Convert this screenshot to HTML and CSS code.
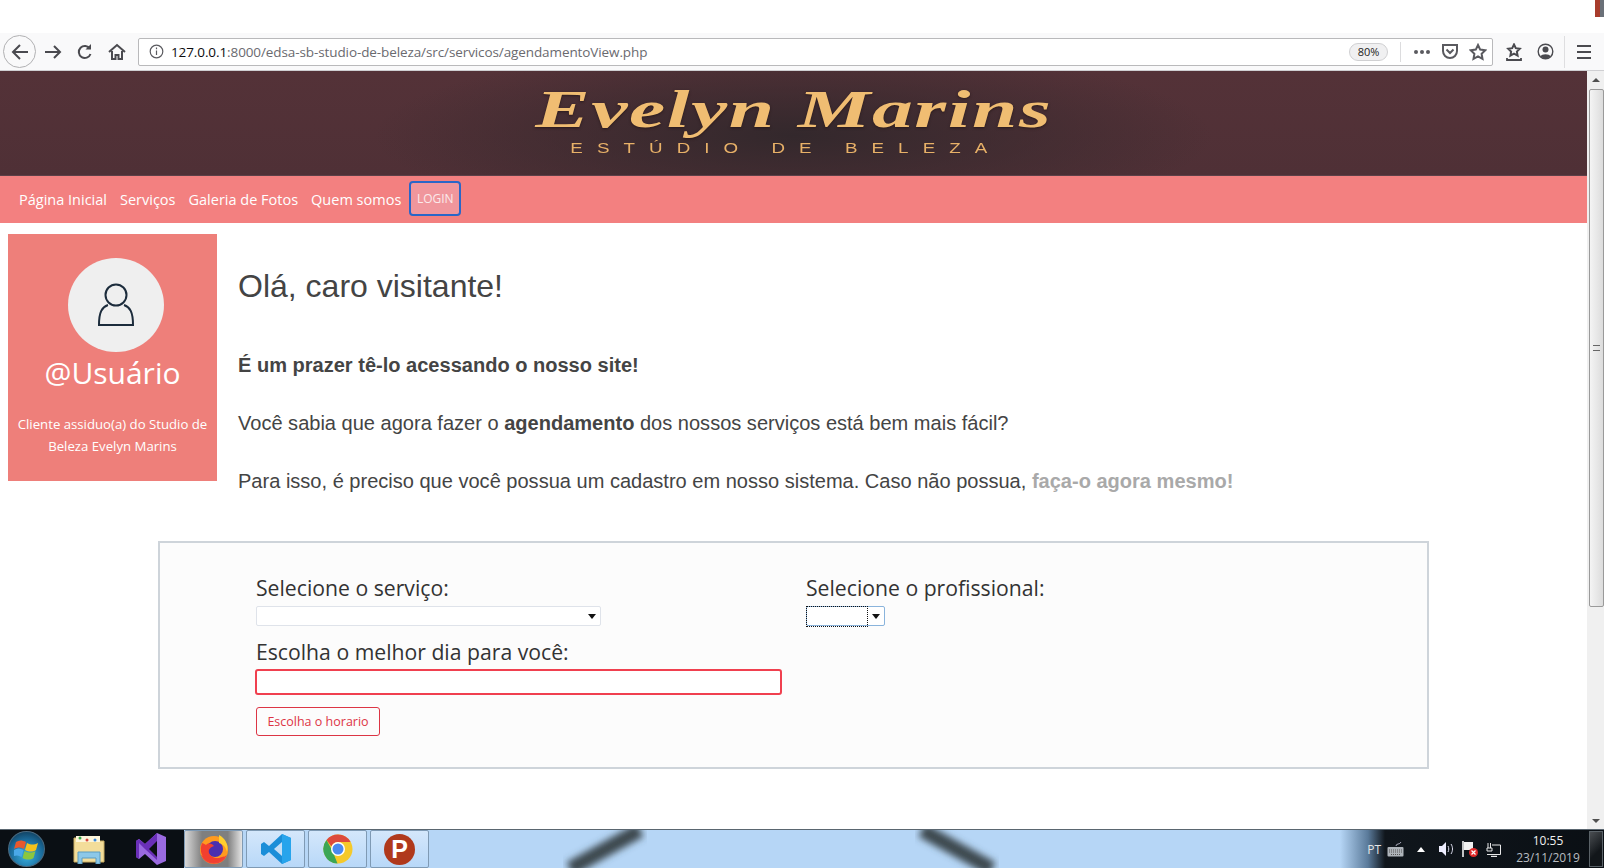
FILE: index.html
```html
<!DOCTYPE html>
<html lang="pt">
<head>
  <meta charset="UTF-8" />
  <title>Agendamento</title>
  <link rel="stylesheet" href="styles.css">
</head>
<body>

  <!-- Strip above the browser -->
  <div class="top-strip"><span class="corner"></span></div>

  <!-- Browser toolbar -->
  <div class="toolbar">
    <button class="tool back-btn">
      <svg width="20" height="20" viewBox="0 0 20 20" fill="none" stroke="#4a4a4f" stroke-width="2"><path d="M18 10H3M10 3l-7 7 7 7"/></svg>
    </button>
    <button class="tool">
      <svg width="18" height="18" viewBox="0 0 18 18" fill="none" stroke="#4a4a4f" stroke-width="2"><path d="M1 9h15M10 3l6 6-6 6"/></svg>
    </button>
    <button class="tool">
      <svg width="18" height="18" viewBox="0 0 18 18" fill="none" stroke="#4a4a4f" stroke-width="2"><path d="M14.5 11a6 6 0 1 1-.6-5.2"/><path d="M15 1v5.5H9.5" fill="#4a4a4f" stroke="none"/></svg>
    </button>
    <button class="tool">
      <svg width="18" height="18" viewBox="0 0 18 18" fill="none" stroke="#4a4a4f" stroke-width="2"><path d="M1 9l8-7 8 7"/><path d="M4 8v8h3.5v-4h3v4H14V8"/></svg>
    </button>

    <div class="urlbar">
      <svg class="info" width="15" height="15" viewBox="0 0 15 15" fill="none" stroke="#5a5a5f" stroke-width="1.2"><circle cx="7.5" cy="7.5" r="6.3"/><path d="M7.5 6.5v4.5M7.5 3.6v1.6"/></svg>
      <span class="url"><b>127.0.0.1</b>:8000/edsa-sb-studio-de-beleza/src/servicos/agendamentoView.php</span>
      <span class="zoom-badge">80%</span>
      <span class="url-sep"></span>
      <span class="dots"><i></i><i></i><i></i></span>
      <svg class="url-icon" width="18" height="18" viewBox="0 0 18 18" fill="none" stroke="#5a5a5f" stroke-width="2"><path d="M2 2h14v6a7 7 0 0 1-14 0z"/><path d="M5.5 6.5L9 10l3.5-3.5"/></svg>
      <svg class="url-icon" width="18" height="18" viewBox="0 0 18 18" fill="none" stroke="#5a5a5f" stroke-width="2"><path d="M9 2l2.2 4.6 5 .7-3.6 3.5.9 5L9 13.4l-4.5 2.4.9-5L1.8 7.3l5-.7z"/></svg>
    </div>

    <button class="tool lib">
      <svg width="18" height="18" viewBox="0 0 18 18" fill="none" stroke="#4a4a4f" stroke-width="2"><path d="M9 1.5l1.8 3.7 4 .6-2.9 2.800.7 4L9 10.700l-3.600 1.900.7-4L3.200 5.800l4-.6z"/><path d="M2 15v2h14v-2" stroke-width="1.8"/></svg>
    </button>
    <button class="tool">
      <svg width="17" height="17" viewBox="0 0 17 17"><circle cx="8.5" cy="8.5" r="7.3" fill="none" stroke="#4a4a4f" stroke-width="1.4"/><circle cx="8.5" cy="6.5" r="3" fill="#4a4a4f"/><path d="M3.5 13.5c1-3 9-3 10 0a7 7 0 0 1-10 0z" fill="#4a4a4f"/></svg>
    </button>
    <span class="tool-sep"></span>
    <button class="tool burger"><i></i><i></i><i></i></button>
  </div>

  <div class="window">
    <div class="page">
      <header class="banner">
        <div class="logo-name">Evelyn Marins</div>
        <div class="logo-sub">ESTÚDIO DE BELEZA</div>
      </header>

      <nav class="nav">
        <a href="#">Página Inicial</a>
        <a href="#">Serviços</a>
        <a href="#">Galeria de Fotos</a>
        <a href="#">Quem somos</a>
        <a href="#" class="login">LOGIN</a>
      </nav>

      <div class="content">
        <aside class="profile">
          <div class="avatar">
            <svg width="38" height="44" viewBox="0 0 38 44" fill="none" stroke="#1c2c3c" stroke-width="2"><circle cx="19" cy="12" r="10.5"/><path d="M11 22C5 24 2 29 2 42h34c0-13-3-18-9-20"/></svg>
          </div>
          <div class="profile-name">@Usuário</div>
          <p class="profile-text">Cliente assiduo(a) do Studio de Beleza Evelyn Marins</p>
        </aside>

        <section class="welcome">
          <h1>Olá, caro visitante!</h1>
          <p class="lead">É um prazer tê-lo acessando o nosso site!</p>
          <p>Você sabia que agora fazer o <b>agendamento</b> dos nossos serviços está bem mais fácil?</p>
          <p>Para isso, é preciso que você possua um cadastro em nosso sistema. Caso não possua, <a href="#">faça-o agora mesmo!</a></p>
        </section>
      </div>

      <form class="booking">
        <div class="col-left">
          <label>Selecione o serviço:</label>
          <span class="select-wrap service-wrap"><select></select></span>
          <label class="day-label">Escolha o melhor dia para você:</label>
          <input type="text" class="day-input" />
          <button type="button" class="btn-time">Escolha o horario</button>
        </div>
        <div class="col-right">
          <label>Selecione o profissional:</label>
          <span class="select-wrap pro-wrap"><select></select></span>
        </div>
      </form>
    </div>

    <div class="scrollbar">
      <span class="sb-btn"><i class="up"></i></span>
      <div class="sb-track">
        <div class="sb-thumb"><span class="grip"></span></div>
      </div>
      <span class="sb-btn"><i class="down"></i></span>
    </div>
  </div>

  <!-- Windows taskbar -->
  <footer class="taskbar">
    <svg class="wallpaper" width="920" height="39" viewBox="0 0 920 39">
      <defs><filter id="soft"><feGaussianBlur stdDeviation="3.5"/></filter></defs>
      <path d="M120 39L190 0" stroke="#3c4a50" stroke-width="15" filter="url(#soft)"/>
      <path d="M472 0L542 39" stroke="#3c4a50" stroke-width="15" filter="url(#soft)"/>
    </svg>

    <div class="start">
      <span class="orb">
        <svg width="26" height="24" viewBox="0 0 26 24"><path d="M2 5c3-2 6-2 10 0l-2 7c-3-2-6-2-10 0z" fill="#e8582c"/><path d="M13 6c4 2 7 2 11 0l-2 7c-3 2-7 2-11 0z" fill="#f4c21c"/><path d="M0 13c3-2 6-2 9.5 0l-2 7c-3-2-6-2-9.5 0z" fill="#4aa8e8"/><path d="M10.5 14c4 2 7 2 11 0l-2 7c-3 2-7 2-11 0z" fill="#8cc63f"/></svg>
      </span>
    </div>

    <span class="pin">
      <svg width="32" height="30" viewBox="0 0 32 30"><path d="M1 4h12l3 3h15v21H1z" fill="#f3dd9a" stroke="#c9ae64"/><path d="M3 2h24v6H3z" fill="#fdf6dc"/><circle cx="7" cy="4" r="1.5" fill="#3aa648"/><circle cx="14" cy="6" r="1.5" fill="#d8483c"/><circle cx="22" cy="6" r="1.5" fill="#3a88d8"/><path d="M5 18h22v12h-4v-6H9v6H5z" fill="#8cc8e8" stroke="#5a9cc0"/></svg>
    </span>
    <span class="pin">
      <svg width="32" height="34" viewBox="0 0 32 34"><path d="M22 1l9 4v24l-9 4-12-11-6 5-3-2V9l3-2 6 5z" fill="#9a6ae0"/><path d="M22 1l-12 11-6-5-3 2v16l3 2V11l6 6 12 11z" fill="#6a2fb8"/><path d="M22 9l-8 8 8 8z" fill="#0c1014"/></svg>
    </span>

    <span class="task active">
      <svg width="32" height="32" viewBox="0 0 32 32"><circle cx="16" cy="17" r="14" fill="#ff9a1f"/><path d="M3 22a14 14 0 0 0 26 0c-5 4-16 5-26 0z" fill="#f0433a"/><circle cx="17" cy="16" r="8" fill="#4a2fb0"/><path d="M21 2c6 3 10 10 8 17-1-5-4-8-8-9z" fill="#ffcf2e"/><path d="M4 10c-3 8 0 15 6 18 7 3 13 0 16-5-6 4-13 2-15-3-1-4 2-6 5-7-3-3-6-3-8-1-1-1-2-1-4-2z" fill="#f2402f"/></svg>
    </span>
    <span class="task">
      <svg width="32" height="32" viewBox="0 0 32 32"><path d="M22 1l9 4v22l-9 4L9 19l-5 4-3-2v-10l3-2 5 4z" fill="#1a8ed8"/><path d="M22 9l-8 7 8 7z" fill="#c2ddf6"/><path d="M22 1l9 4v22l-9 4z" fill="#27a4ec"/></svg>
    </span>
    <span class="task">
      <svg width="30" height="30" viewBox="0 0 30 30"><circle cx="15" cy="15" r="14.5" fill="#f5c92a"/><path d="M15 .5A14.5 14.5 0 0 1 27.6 8H15a7 7 0 0 0-6.5 4.5L3.5 6A14.5 14.5 0 0 1 15 .5z" fill="#dd4a3c"/><path d="M3.5 6l6 11 5 12.5A14.5 14.5 0 0 1 3.5 6z" fill="#3ba655"/><circle cx="15" cy="15" r="7" fill="#fff"/><circle cx="15" cy="15" r="5.5" fill="#4a8af0"/></svg>
    </span>
    <span class="task">
      <span class="psiphon">P</span>
    </span>

    <div class="tray">
      <span class="lang">PT</span>
      <svg width="17" height="15" viewBox="0 0 17 15"><path d="M9 4c0-3 4-1 5-4" fill="none" stroke="#aab" stroke-width="1"/><rect x=".5" y="5" width="16" height="9.5" rx="1" fill="#aeb4ba"/><path d="M2 8h13M2 10h13M4 12.5h9" stroke="#555" stroke-dasharray="1 1"/></svg>
      <i class="tray-up"></i>
      <svg width="15" height="14" viewBox="0 0 15 14"><path d="M0 4h3l4-4v14l-4-4H0z" fill="#eef"/><path d="M9 4c1 2 1 4 0 6M12 2c2 3 2 7 0 10" fill="none" stroke="#dde" stroke-width="1"/></svg>
      <svg width="16" height="16" viewBox="0 0 16 16"><path d="M1 0v16" stroke="#fff" stroke-width="1.5"/><path d="M2 1h9v8H2z" fill="#f0f0f0"/><circle cx="11.5" cy="11.5" r="4.5" fill="#e02a2a"/><path d="M9.5 9.5l4 4M13.5 9.5l-4 4" stroke="#fff" stroke-width="1.2"/></svg>
      <svg width="15" height="15" viewBox="0 0 15 15" fill="none" stroke="#e8e8e8"><path d="M2 1v5M4.5 1v5M1 6h5v3H1z"/><path d="M6 3h8.5v9.500H1"/><path d="M5 14.5h6" stroke-width="1.4"/></svg>
      <div class="clock"><span>10:55</span><span>23/11/2019</span></div>
      <span class="show-desktop"></span>
    </div>
  </footer>

</body>
</html>
```

FILE: styles.css
```css
* {
  box-sizing: border-box;
}

html, body {
  height: 100%;
}

body {
  margin: 0;
  height: 868px;
  width: 1604px;
  overflow: hidden;
  display: flex;
  flex-direction: column;
  font-family: 'Liberation Sans', Arial, sans-serif;
  color: #444;
  background: white;
}

/* strip above browser */
.top-strip {
  height: 33px;
  flex: none;
  display: flex;
  justify-content: flex-end;
  background: white;
}

.corner {
  width: 9px;
  height: 17px;
  background: linear-gradient(to right, #a83c2c 55%, #6a7078 55%);
}

/* toolbar */
.toolbar {
  height: 38px;
  flex: none;
  display: flex;
  align-items: center;
  padding: 0 3px;
  background: #f9f9fa;
  border-bottom: 1px solid #cfcfd2;
}

.tool {
  width: 32px;
  height: 32px;
  flex: none;
  display: flex;
  align-items: center;
  justify-content: center;
  padding: 0;
  border: none;
  background: none;
}

.back-btn {
  width: 33px;
  height: 33px;
  border: 1px solid #b1b1b3;
  border-radius: 50%;
  margin-right: 1px;
}

.urlbar {
  width: 1355px;
  height: 28px;
  margin-left: 5px;
  margin-right: 5px;
  flex: none;
  display: flex;
  align-items: center;
  padding: 0 5px 0 10px;
  background: white;
  border: 1px solid #b9b9bb;
  border-radius: 2px;
}

.info {
  margin-right: 7px;
  flex: none;
}

.url {
  flex: 1;
  font-family: 'Open Sans', sans-serif;
  font-size: 13.5px;
  letter-spacing: -0.1px;
  color: #6a6a6f;
  white-space: nowrap;
}

.url b {
  font-weight: normal;
  color: #0c0c0d;
}

.zoom-badge {
  width: 39px;
  height: 18px;
  line-height: 16px;
  text-align: center;
  font-family: 'Open Sans', sans-serif;
  font-size: 11px;
  color: #222;
  background: #f0f0f1;
  border: 1px solid #d0d0d2;
  border-radius: 9px;
}

.url-sep {
  width: 1px;
  height: 20px;
  margin: 0 13px 0 12px;
  background: #dcdcde;
}

.dots {
  display: flex;
  gap: 2px;
  margin-right: 11px;
}

.dots i {
  width: 4px;
  height: 4px;
  border-radius: 50%;
  background: #5a5a5f;
}

.url-icon {
  margin-right: 10px;
  flex: none;
}

.url-icon:last-child {
  margin-right: 0;
}

.lib {
  margin-right: -1px;
}

.tool-sep {
  width: 1px;
  height: 32px;
  margin: 0 3px 0 3px;
  background: #dedee0;
  flex: none;
}

.burger {
  flex-direction: column;
  gap: 4px;
}

.burger i {
  width: 14px;
  height: 2px;
  background: #4a4a4f;
}

/* page */
.window {
  height: 758px;
  flex: none;
  display: flex;
}

.page {
  width: 1587px;
  flex: none;
  overflow: hidden;
}

.banner {
  height: 105px;
  display: flex;
  flex-direction: column;
  align-items: center;
  padding-top: 14px;
  background: radial-gradient(ellipse 420px 90px at 50% 62%, #33282c 0%, #46303a00 100%), linear-gradient(#543238, #4f3036);
  border-bottom: 1px solid #5c4048;
}

.logo-name {
  font-family: 'Liberation Serif', serif;
  font-style: italic;
  font-weight: bold;
  font-size: 52px;
  line-height: 50px;
  letter-spacing: 1px;
  color: #f0bd72;
  white-space: nowrap;
  transform: scaleX(1.57);
  text-shadow: 0 1px 2px #2a1a1c;
}

.logo-sub {
  font-size: 14px;
  line-height: 14px;
  margin-top: 6px;
  letter-spacing: 10.5px;
  margin-right: 16px;
  color: #e8b168;
  white-space: nowrap;
  transform: scaleX(1.34);
}

.nav {
  height: 47px;
  display: flex;
  align-items: center;
  padding: 0 8px 0 19px;
  background: #f38080;
}

.nav a {
  font-family: 'Open Sans', sans-serif;
  font-size: 14.5px;
  color: white;
  text-decoration: none;
  margin-right: 13px;
  white-space: nowrap;
}

.nav .login {
  width: 52px;
  height: 35px;
  margin-left: -5px;
  margin-top: -3px;
  padding: 0;
  line-height: 31px;
  text-align: center;
  font-size: 12px;
  color: #fbeaea;
  background: #f0969c;
  border: 2px solid #2a66c8;
  border-radius: 4px;
}

.content {
  display: flex;
  padding: 11px 0 0 8px;
}

.profile {
  width: 209px;
  height: 247px;
  flex: none;
  display: flex;
  flex-direction: column;
  align-items: center;
  padding-top: 24px;
  background: #ee7f7a;
  color: white;
}

.avatar {
  width: 96px;
  height: 94px;
  flex: none;
  display: flex;
  align-items: center;
  justify-content: center;
  margin-left: 7px;
  background: #efefef;
  border-radius: 50%;
}

.profile-name {
  font-family: 'Open Sans', sans-serif;
  font-size: 30px;
  line-height: 40px;
  margin-top: 1px;
}

.profile-text {
  margin: 20px 0 0;
  padding: 0 4px;
  text-align: center;
  font-family: 'Open Sans', sans-serif;
  font-size: 13.2px;
  line-height: 22px;
}

.welcome {
  margin-left: 21px;
  font-size: 20.05px;
  line-height: 28px;
}

.welcome h1 {
  margin: 32px 0 0;
  font-size: 32px;
  font-weight: normal;
  line-height: 40px;
}

.welcome p {
  margin: 30px 0 0;
}

.welcome .lead {
  margin-top: 45px;
  font-weight: bold;
}

.welcome a {
  color: #a9a9a9;
  font-weight: bold;
  text-decoration: none;
}

.booking {
  width: 1271px;
  height: 228px;
  margin: 46px 0 0 158px;
  display: flex;
  padding: 29px 0 0 96px;
  background: #fcfcfc;
  border: 2px solid #ced4da;
}

.col-left {
  width: 527px;
  margin-right: 23px;
  display: flex;
  flex-direction: column;
  align-items: flex-start;
}

.col-right {
  display: flex;
  flex-direction: column;
  align-items: flex-start;
}

.booking label {
  font-family: 'Open Sans', sans-serif;
  font-size: 21.2px;
  line-height: 32px;
  color: #333;
  white-space: nowrap;
}

.select-wrap {
  position: relative;
  display: block;
  height: 20px;
  margin-top: 2px;
}

.select-wrap::after {
  content: "";
  position: absolute;
  right: 5px;
  top: 8px;
  border-left: 4px solid transparent;
  border-right: 4px solid transparent;
  border-top: 5px solid #111;
}

.select-wrap select {
  display: block;
  width: 100%;
  height: 20px;
  appearance: none;
  background: white;
  border: 1px solid #dfe3ea;
  border-radius: 2px;
}

.service-wrap {
  width: 345px;
}

.pro-wrap {
  width: 79px;
}

.pro-wrap::before {
  content: "";
  position: absolute;
  left: 0;
  top: 0;
  width: 60px;
  height: 19px;
  border: 1px dotted #111;
}

.pro-wrap select {
  border-color: #8ab4dc;
}

.booking .day-label {
  margin-top: 10px;
}

.day-input {
  width: 527px;
  height: 26px;
  margin: 1px 0 0 -1px;
  padding: 0;
  background: white;
  border: 2px solid #f0404f;
  border-radius: 3px;
}

.btn-time {
  width: 124px;
  height: 29px;
  margin-top: 12px;
  padding: 0;
  font-family: 'Open Sans', sans-serif;
  font-size: 12.5px;
  color: #dc3545;
  background: #fcfcfc;
  border: 1px solid #dc3545;
  border-radius: 3px;
}

/* scrollbar */
.scrollbar {
  width: 17px;
  flex: none;
  display: flex;
  flex-direction: column;
  background: #f0f0f0;
}

.sb-btn {
  height: 17px;
  flex: none;
  display: flex;
  align-items: center;
  justify-content: center;
}

.sb-btn i {
  width: 0;
  height: 0;
  border-left: 4px solid transparent;
  border-right: 4px solid transparent;
}

.sb-btn .up {
  border-bottom: 4px solid #505050;
}

.sb-btn .down {
  border-top: 4px solid #505050;
}

.sb-track {
  flex: 1;
  padding: 1px 0 0 2px;
}

.sb-thumb {
  height: 518px;
  display: flex;
  align-items: center;
  justify-content: center;
  background: linear-gradient(to right, #f4f4f4, #dcdcdc);
  border: 1px solid #9a9a9a;
  border-radius: 2px;
}

.grip {
  width: 7px;
  height: 6px;
  border-top: 1px solid #666;
  border-bottom: 1px solid #666;
  background: linear-gradient(transparent 40%, #666 40%, #666 60%, transparent 60%);
}

/* taskbar */
.taskbar {
  position: relative;
  height: 39px;
  flex: none;
  display: flex;
  align-items: center;
  overflow: hidden;
  background: linear-gradient(to right, #0a0f14 0, #0a0f14 184px, #b6d6f6 184px, #b6d6f6 1340px, #5a7a9a 1368px, #10161c 1385px, #0a0f14 100%);
  border-top: 1px solid #5a6670;
}

.wallpaper {
  position: absolute;
  left: 450px;
  top: 0;
}

.start {
  width: 53px;
  height: 38px;
  flex: none;
  display: flex;
  align-items: center;
  justify-content: center;
}

.orb {
  width: 37px;
  height: 36px;
  display: flex;
  align-items: center;
  justify-content: center;
  border-radius: 50%;
  background: radial-gradient(circle at 50% 70%, #3ab0e0 0%, #1a6a9a 55%, #0c2a40 100%);
  border: 1px solid #4a6a80;
}

.pin {
  width: 72px;
  flex: none;
  display: flex;
  justify-content: center;
  position: relative;
}

.pin + .pin {
  width: 52px;
  margin-right: 7px;
}

.task {
  position: relative;
  width: 59px;
  height: 38px;
  margin-right: 3px;
  flex: none;
  display: flex;
  align-items: center;
  justify-content: center;
  background: linear-gradient(#d4e7fb, #b8d8f8);
  border: 1px solid #7f9ab4;
  border-radius: 2px;
}

.task.active {
  background: linear-gradient(to right, #d8d8d8, #7f7f7f 30%, #7f7f7f 75%, #e4e4e4);
}

.psiphon {
  width: 31px;
  height: 31px;
  line-height: 31px;
  text-align: center;
  font-family: 'Liberation Sans', sans-serif;
  font-weight: bold;
  font-size: 25px;
  color: white;
  background: #b0391c;
  border-radius: 50%;
}

.tray {
  position: relative;
  margin-left: auto;
  display: flex;
  align-items: center;
  height: 38px;
  color: #e6e6e6;
}

.lang {
  font-family: 'Open Sans', sans-serif;
  font-size: 12px;
  margin-right: 6px;
}

.tray-up {
  width: 0;
  height: 0;
  margin: 0 14px 0 13px;
  border-left: 4px solid transparent;
  border-right: 4px solid transparent;
  border-bottom: 5px solid white;
}

.tray svg + svg {
  margin-left: 8px;
}

.tray-up + svg {
  margin-left: 0;
}

.clock {
  width: 76px;
  margin-left: 9px;
  margin-right: 3px;
  display: flex;
  flex-direction: column;
  align-items: center;
  font-family: 'Open Sans', sans-serif;
  font-size: 12px;
  line-height: 17px;
  color: #f0f0f0;
}

.clock span + span {
  color: #b8bcc0;
}

.show-desktop {
  width: 14px;
  height: 36px;
  margin-right: 1px;
  background: linear-gradient(135deg, #4a4e52, #12161a 60%);
  border: 1px solid #5a6268;
}
```
